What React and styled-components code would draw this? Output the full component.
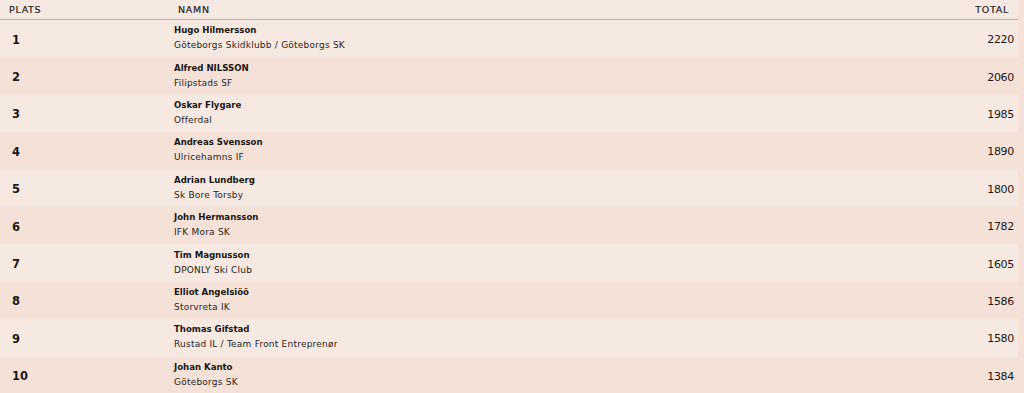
import React from "react";
import styled, { createGlobalStyle } from "styled-components";

const Global = createGlobalStyle`
  html, body { margin: 0; padding: 0; background: #f4e2d8; }
  body { font-family: "DejaVu Sans", "Liberation Sans", sans-serif; color: #1c1715; }
`;

const Table = styled.div`
  width: 1018px;
  display: flex;
  flex-direction: column;
`;

const Header = styled.div`
  display: grid;
  grid-template-columns: 169px 1fr auto;
  align-items: center;
  height: 19px;
  padding: 0 9px 0 9px;
  background: #f6e9e1;
  border-bottom: 1px solid #bfb2ab;
  font-size: 9.5px;
  font-weight: 400;
  letter-spacing: 0.7px;
  color: #2a2422;
  -webkit-text-stroke: 0.2px #2a2422;
`;

const Row = styled.div`
  display: grid;
  grid-template-columns: 162px 1fr auto;
  align-items: center;
  height: 37.4px;
  padding: 0 4px 0 12px;
  background: ${(p) => (p.$odd ? "#f6e9e1" : "transparent")};
`;

const Rank = styled.div`
  font-size: 11.5px;
  font-weight: 700;
  padding-top: 2px;
`;

const NameCell = styled.div`
  display: flex;
  flex-direction: column;
  gap: 4px;
  padding-bottom: 1px;
`;

const Name = styled.div`
  font-size: 8.6px;
  font-weight: 700;
  line-height: 11px;
  letter-spacing: -0.02px;
`;

const Club = styled.div`
  font-size: 9px;
  line-height: 11px;
  color: #2a2422;
  letter-spacing: 0.22px;
`;

const Total = styled.div`
  font-size: 11px;
  padding-top: 2px;
  letter-spacing: -0.3px;
`;

const data = [
  ["1", "Hugo Hilmersson", "Göteborgs Skidklubb / Göteborgs SK", "2220"],
  ["2", "Alfred NILSSON", "Filipstads SF", "2060"],
  ["3", "Oskar Flygare", "Offerdal", "1985"],
  ["4", "Andreas Svensson", "Ulricehamns IF", "1890"],
  ["5", "Adrian Lundberg", "Sk Bore Torsby", "1800"],
  ["6", "John Hermansson", "IFK Mora SK", "1782"],
  ["7", "Tim Magnusson", "DPONLY Ski Club", "1605"],
  ["8", "Elliot Angelsiöö", "Storvreta IK", "1586"],
  ["9", "Thomas Gifstad", "Rustad IL / Team Front Entreprenør", "1580"],
  ["10", "Johan Kanto", "Göteborgs SK", "1384"],
];

export default function App() {
  return (
    <>
      <Global />
      <Table>
        <Header>
          <div>PLATS</div>
          <div>NAMN</div>
          <div>TOTAL</div>
        </Header>
        {data.map(([r, n, c, t], i) => (
          <Row key={r} $odd={i % 2 === 0}>
            <Rank>{r}</Rank>
            <NameCell>
              <Name>{n}</Name>
              <Club>{c}</Club>
            </NameCell>
            <Total>{t}</Total>
          </Row>
        ))}
      </Table>
    </>
  );
}
